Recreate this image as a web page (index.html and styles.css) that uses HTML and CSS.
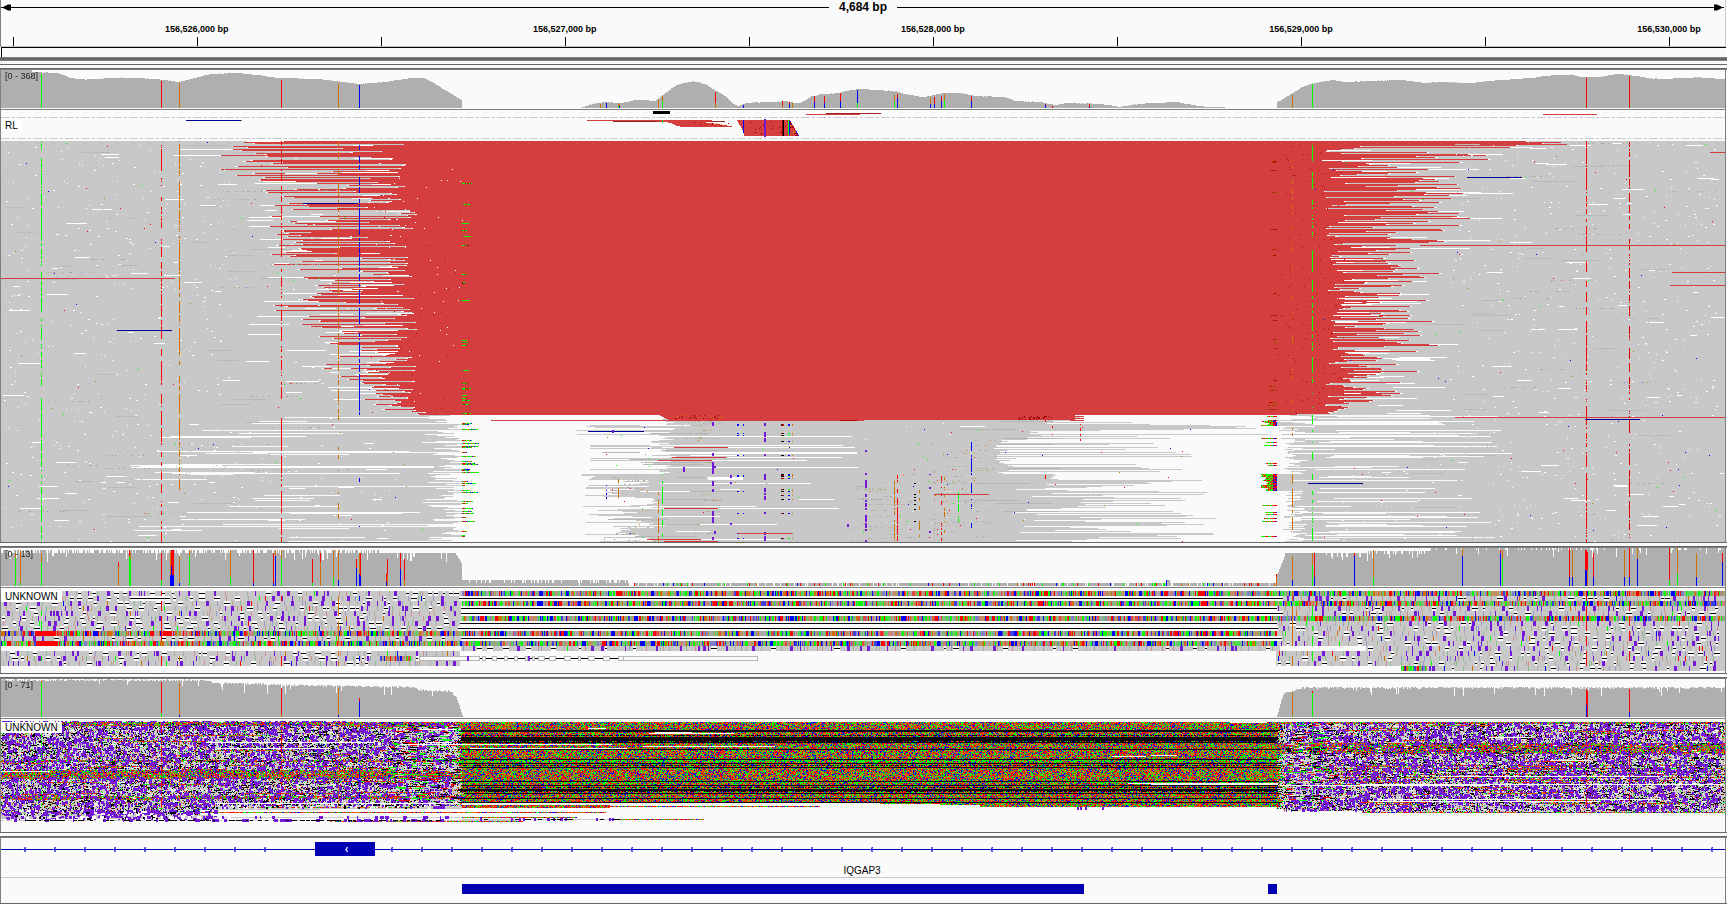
FILE: index.html
```html
<!DOCTYPE html>
<html lang="en">
<head>
<meta charset="utf-8">
<title>IQGAP3 - alignment browser</title>
<link rel="stylesheet" href="styles.css">
</head>
<body>
<main class="browser">
  <header class="ruler">
    <div class="span">
      <svg class="span-line" width="828" height="9" viewBox="0 0 828 9"><path d="M0 4.5H828" stroke="#000"/><path d="M1 4.5L7 1.5H10V7.5H7Z"/></svg>
      <span class="span-text">4,684 bp</span>
      <svg class="span-line" width="828" height="9" viewBox="0 0 828 9"><path d="M0 4.5H827" stroke="#000"/><path d="M826 4.5L820 1.5H817V7.5H820Z"/></svg>
    </div>
    <div class="scale">
      <span class="tick"></span>
      <span class="tick">156,526,000 bp</span>
      <span class="tick"></span>
      <span class="tick">156,527,000 bp</span>
      <span class="tick"></span>
      <span class="tick">156,528,000 bp</span>
      <span class="tick"></span>
      <span class="tick">156,529,000 bp</span>
      <span class="tick"></span>
      <span class="tick">156,530,000 bp</span>
    </div>
  </header>
  <div class="locus"></div>
  <div class="bar"></div>
  <div class="splitter head"></div>

  <section class="panel">
    <div class="track coverage"><canvas id="cov1" width="1724" height="39"></canvas><span class="range">[0 - 368]</span></div>
    <div class="track reads"><canvas id="reads1" width="1724" height="432"></canvas><span class="group rl">RL</span></div>
  </section>
  <div class="splitter"></div>
  <section class="panel">
    <div class="track coverage"><canvas id="cov2" width="1724" height="39"></canvas><span class="range">[0 - 13]</span></div>
    <div class="track reads"><canvas id="reads2" width="1724" height="85"></canvas><span class="group">UNKNOWN</span></div>
  </section>
  <div class="splitter"></div>
  <section class="panel">
    <div class="track coverage"><canvas id="cov3" width="1724" height="39"></canvas><span class="range">[0 - 71]</span></div>
    <div class="track reads"><canvas id="reads3" width="1724" height="113"></canvas><span class="group">UNKNOWN</span></div>
  </section>
  <div class="splitter"></div>
  <section class="panel">
    <div class="track gene"><canvas id="gene" width="1724" height="26"></canvas><span class="gene-name">IQGAP3</span></div>
    <div class="track regions"><span class="region wide"></span><span class="region small"></span></div>
  </section>
  <div class="floor"></div>
</main>
<script src="tracks.js"></script>
</body>
</html>
```
FILE: styles.css
```css
* { box-sizing: border-box; }

body {
  margin: 0;
  background: #fafafa;
  color: #000;
  font-family: "Liberation Sans", Arial, sans-serif;
  overflow: hidden;
}

.browser {
  display: flex;
  flex-direction: column;
  width: 1727px;
  height: 904px;
}

.ruler {
  width: 1726px;
  height: 47px;
  border-left: 1px solid #808080;
  border-right: 1px solid #c8c8d0;
  border-bottom: 1px solid #c4c4cc;
  overflow: hidden;
}

.span {
  display: flex;
  align-items: center;
  justify-content: space-between;
  height: 15px;
}

.span-line { flex: none; display: block; }

.span-text {
  font-size: 12px;
  font-weight: bold;
  line-height: 15px;
  white-space: nowrap;
}

.scale {
  display: flex;
  width: 1841px;
  margin-left: -80.4px;
  height: 31px;
}

.tick {
  flex: 0 0 184.05px;
  height: 31px;
  padding-top: 9px;
  font-size: 9px;
  font-weight: bold;
  line-height: 11px;
  text-align: center;
  background: linear-gradient(#000, #000) 92px 22px / 1px 9px no-repeat;
}

.locus {
  width: 1725px;
  height: 10px;
  margin-left: 1px;
  border: solid #000;
  border-width: 1px 0 0 1px;
}

.bar {
  height: 4px;
  background: #666;
  border: solid #808080;
  border-width: 1px 0;
}

.splitter {
  flex: none;
  height: 6px;
  background: linear-gradient(#666 1px, #fafafa 1px 4px, #666 4px 5px, #808080 5px);
}

.splitter.head {
  height: 9px;
  background: linear-gradient(#fafafa 3px, #666 3px 4px, #fafafa 4px 7px, #666 7px 8px, #808080 8px);
}

.panel {
  width: 1726px;
  border: solid #808080;
  border-width: 0 1px;
}

.track { position: relative; }
.track canvas { display: block; }
.coverage { height: 40px; border-bottom: 1px solid #808080; }

.range {
  position: absolute;
  left: 4px;
  top: 0;
  font-size: 9px;
  line-height: 12px;
  color: #222;
}

.group {
  position: absolute;
  left: 0;
  top: 3px;
  width: 61px;
  height: 11px;
  padding-left: 4px;
  background: #fff;
  font-size: 10px;
  line-height: 11px;
}

.group.rl { top: 10px; width: 22px; }

.gene {
  height: 40px;
  border-bottom: 1px solid #c8c8c8;
}

.gene-name {
  display: block;
  margin-top: 1px;
  padding-right: 2px;
  text-align: center;
  font-size: 10px;
  line-height: 12px;
}

.regions {
  display: flex;
  height: 25px;
  padding: 6px 0 0 461px;
}

.region { height: 10px; background: #0000b2; }
.region.wide { width: 622px; }
.region.small { width: 9px; margin-left: 184px; }

.floor { height: 1px; background: #666; }
```
FILE: tracks.js
```js
var GREY = '#c8c8c8', COV = '#afafaf', DARK = '#b6b6b6', RED = '#d53e3e', BG = '#fafafa',
    A = '#00ff00', T = '#ff0000', C = '#0000ff', G = '#d17105', INS = '#7519d9', NAVY = '#000096';
var BASES = [A, T, C, G];

var seed = 20231;
function rnd() {
  seed = (seed + 0x6D2B79F5) | 0;
  var t = Math.imul(seed ^ (seed >>> 15), 1 | seed);
  t = (t + Math.imul(t ^ (t >>> 7), 61 | t)) ^ t;
  return ((t ^ (t >>> 14)) >>> 0) / 4294967296;
}
function between(a, b) { return a + rnd() * (b - a); }
function int(a, b) { return Math.floor(between(a, b + 1)); }
function pick(list) { return list[Math.floor(rnd() * list.length)]; }

/* Painter in window coordinates: top is the first y of the track. */
function painter(id, top) {
  var ctx = document.getElementById(id).getContext('2d');
  return function (x0, y, x1, h, color) {
    ctx.fillStyle = color;
    ctx.fillRect(Math.round(x0) - 1, Math.round(y) - top, Math.round(x1) - Math.round(x0), h);
  };
}

/* Linear interpolation in a flat list x0,y0,x1,y1,... */
function lerp(pts, x) {
  for (var i = 2; i < pts.length; i += 2) {
    if (x <= pts[i]) {
      var f = (x - pts[i - 2]) / (pts[i] - pts[i - 2]);
      return pts[i - 1] + f * (pts[i + 1] - pts[i - 1]);
    }
  }
  return pts[pts.length - 1];
}

/* ---------- panel 1 coverage ---------- */
(function () {
  var p = painter('cov1', 70);
  var parts = [
    [1,70,30,70,33,72,58,73,70,78,85,79.5,120,77.5,155,79,179,82,190,79,210,74,240,73,255,75,280,78,320,79,358,84,385,82,410,78,424,78,440,87,461,100],
    [582,107,592,104,603,102,620,103,635,100,645,100,655,101,661,96,668,91,676,85,692,81,705,84,714,90,722,94,728,99,733,104,738,106,745,103,770,102,785,101,795,103,802,102,812,96,820,94.5,838,93,850,90,860,89,875,90,893,91,905,94,920,97,930,96,942,93,960,93,975,96,1005,97,1015,101,1040,102,1055,105,1065,103,1085,103.5,1100,104,1112,105.5,1120,107,1130,105,1150,103,1176,102,1190,104.5,1205,107,1224,107],
    [1277,102,1286,97,1302,87,1310,84,1320,82,1332,80,1345,82,1370,81,1400,80,1425,83,1440,82,1470,83,1500,80,1530,78,1545,76,1570,74.5,1580,77,1600,77,1615,74,1630,75,1650,78.5,1665,79,1680,78,1700,77.5,1725,79]
  ];
  parts.forEach(function (pts) {
    for (var x = pts[0]; x < pts[pts.length - 2] + 1; x++) {
      var y = Math.round(lerp(pts, x) + between(-0.3, 0.3));
      p(x, y, x + 1, 108 - y, COV);
    }
  });
  [[41,74,A],[161,81,T],[179,83,G],[281,80,T],[338,83,G],[359,85,C],[1292,95,G],[1312,84,A],[1586,78,T],[1629,76,T]]
    .forEach(function (s) { p(s[0], s[1], s[0] + 1, 108 - s[1], s[2]); });
  /* x, top, switch y, upper colour, lower colour */
  [[600,104,107,G,G],[606,103,107,C,C],[618,103,106,G,A],[619,104,106,G,C],[658,100,108,G,G],[662,96,101,G,A],[715,92,103,T,G],[743,105,108,C,C],[782,101,105,T,G],[789,102,104,T,C],[792,103,108,G,G],[814,96,102,T,C],[824,96,103,T,C],[840,93,101,T,C],[857,90,103,C,A],[894,95,102,G,A],[897,94,98,T,C],[930,98,104,G,C],[934,97,104,T,C],[941,96,101,T,C],[944,94,100,G,A],[971,96,101,T,C],[1045,104,105,T,C],[1052,106,108,T,T],[1089,104,107,T,C]]
    .forEach(function (s) { p(s[0], s[1], s[0] + 1, s[2] - s[1], s[3]); p(s[0], s[2], s[0] + 1, 108 - s[2], s[4]); });
})();

/* ---------- panel 1 alignments ---------- */
(function () {
  var p = painter('reads1', 110), x, y, i;

  [117, 138].forEach(function (yy) {
    for (x = 1; x < 1725; x += 16) { p(x, yy, x + 9, 1, GREY); p(x + 11, yy, x + 14, 1, GREY); }
  });
  p(186, 120, 241, 1, NAVY); p(241, 120, 242, 1, G);
  p(653, 111, 670, 3, '#000');
  p(826, 113, 881, 1, '#a02020'); p(806, 114, 860, 1, RED);
  p(1543, 114, 1597, 1, RED);
  p(587, 120, 712, 1, RED); p(613, 121, 725, 1, '#8c2b20'); p(657, 120, 712, 2, RED);
  [[660,712],[668,706],[672,714],[674,720],[676,727],[680,732]].forEach(function (r, k) { p(r[0], 121 + k, r[1], 1, RED); });
  for (i = 0; i < 16; i++) { p(737 + Math.min(i * 0.6, 7), 120 + i, 789 + i * 0.6, 1, RED); }
  for (i = 0; i < 22; i++) {
    x = int(694, 728); p(x, 120 + (x > 710 ? int(3, 6) : int(0, 4)), x + 1, 1, pick([G, '#c00000', '#c00000']));
    x = int(750, 790); y = int(121, 134); p(x, y, x + 1, 1, '#a80000');
  }
  for (i = 0; i < 16; i++) {
    x = 789 + i * 0.6;
    p(x - 3, 120 + i, x, 1, pick([G, '#a80000', RED])); p(x, 120 + i, x + 1, 1, pick([C, T, '#a80000']));
  }
  p(662, 120, 663, 3, A); p(743, 120, 744, 13, C); p(764, 119, 766, 18, INS);
  p(782, 120, 783, 16, '#7c0000'); p(783, 120, 784, 16, '#000'); p(788, 120, 789, 15, A); p(789, 121, 790, 14, C);

  var leftEdge = [141,243,143,205,148,203,152,230,160,205,170,215,176,238,184,250,190,244,200,262,215,265,230,270,250,268,270,258,290,300,305,260,320,300,345,308,365,318,380,330,395,345,405,370,415,398];
  var rightEdge = [141,1567,144,1560,152,1500,156,1520,160,1515,165,1442,176,1480,190,1475,205,1475,220,1480,235,1470,250,1410,265,1440,275,1455,290,1410,300,1442,320,1435,345,1440,360,1418,372,1420,380,1405,395,1400,405,1370,415,1335];

  for (y = 141; y < 415; y++) {
    p(1, y, 1725, 1, GREY);
    var near = lerp(leftEdge, y), L, R;
    L = rnd() < 0.4 ? between(near, near + 40) : between(near + 25, 415);
    if (rnd() < 0.2) { L = between(385, 418); }
    var far = lerp(rightEdge, y);
    R = rnd() < 0.36 ? between(far - 60, far) : between(1325, far - 15);
    if (rnd() < 0.12) { R = between(1322, 1345); }
    p(L, y, R, 1, RED);
    var gl = rnd() < 0.13 ? between(15, 70) : int(1, 3), gr = rnd() < 0.13 ? between(15, 60) : int(1, 3);
    p(L - gl, y, L, 1, '#fff'); p(R, y, R + gr, 1, '#fff');
    if (rnd() < 0.12) { x = between(245, 370); p(x, y, x + between(8, 40), 1, '#fff'); }
    if (rnd() < 0.10) { x = between(290, 400); p(x, y, x + 2, 1, '#fff'); }
    if (y > 300 && rnd() < 0.22) { x = between(1330, 1400); p(x, y, x + between(15, 55), 1, '#fff'); }
  }
  p(1, 142, 1725, 1, GREY); p(244, 142, 1561, 1, RED);
  p(1, 144, 1725, 1, GREY); p(404, 144, 1567, 1, RED);
  p(1, 415, 1725, 127, GREY);

  /* lower part: gaps left and right of the deletion, and the amplified middle */
  for (y = 415; y < 542; y++) {
    var tipRow = (y >= 420 && y < 426) || (y >= 474 && y < 491), a, b, c, d;
    a = rnd() < 0.25 ? between(452, 461) : between(420, 458);
    if (rnd() < 0.28 && y > 419) { a = 462; }
    d = tipRow ? 1277 : between(1283, 1308);
    if (y < 440 && !tipRow) { d = between(1277, 1330); }
    if (y < 420) {
      b = 577 + between(84, 98); c = between(1060, 1085);
    } else if (y < 440) {
      b = rnd() < 0.4 ? between(575, 600) : between(658, 675); c = rnd() < 0.5 ? between(1100, 1280) : between(1025, 1050);
    } else if (y < 474) {
      b = rnd() < 0.15 ? 590 : between(650, 678); c = rnd() < 0.32 ? between(1100, 1195) : between(994, 1018);
    } else if (y < 480) {
      b = between(581, 595); c = between(1050, 1058);
    } else {
      b = rnd() < 0.4 ? between(582, 625) : between(618, 665); c = rnd() < 0.45 ? between(1130, 1230) : between(1005, 1120);
    }
    p(a, y, b, 1, BG); p(c, y, d, 1, BG);
    if (a === 462) {
      var end = int(465, 479);
      for (x = 462; x < end; x++) { p(x, y, x + 1, 1, x < 465 ? pick([T, A, '#a04000']) : pick([A, A, A, G, C])); }
    }
    if (tipRow || rnd() < 0.12) {
      for (x = int(1261, 1269); x < 1277; x++) { p(x, y, x + 1, 1, x > 1272 ? pick([T, T, C]) : pick([A, A, G, T])); }
    }
    if (rnd() < 0.26) { x = between(130, 300); p(x, y, rnd() < 0.4 ? a : x + between(40, 130), 1, BG); }
    if (rnd() < 0.32) { x = between(1290, 1340); p(x, y, x + between(40, 185), 1, BG); }
    if (rnd() < 0.08) { x = between(600, 690); p(x, y, x + 60, 1, DARK); }
    if (rnd() < 0.08) { x = between(940, 1010); p(x, y, x + 55, 1, DARK); }
  }
  for (y = 415; y < 421; y++) { p(660 + (y - 415) * 2, y, 1084 - (y % 2) * 9, 1, RED); }
  p(491, 420, 864, 1, RED); p(864, 420, 1070, 1, GREY);

  [[640,436,852],[650,445,843],[662,447,855],[640,452,857],[640,453,857],[690,455,743],[728,457,842],[712,460,807],[660,467,858],[707,477,743],[708,478,743],[708,479,743],[660,483,811],[640,491,690],[720,489,740],[799,499,834],[640,506,756],[718,508,839],[660,516,720],[700,524,777],[676,531,710],[674,539,780],[640,425,690],[960,426,985],[1290,453,1512],[1290,446,1497],[1290,436,1491],[1320,488,1435],[1300,512,1480],[1290,517,1478],[1276,421,1474],[170,436,306],[140,466,434],[130,465,222],[131,467,434],[172,473,400],[187,512,420],[157,451,400]]
    .forEach(function (g) { p(g[0], g[1], g[2], 1, '#fff'); });

  /* small gaps and mismatches scattered over the grey reads */
  for (i = 0; i < 1300; i++) {
    x = rnd() < 0.5 ? between(3, 400) : between(1340, 1722); y = int(142, 541);
    if ((x > 240 && x < 430 || x < 1450 && x > 1300) && y < 415) { continue; }
    p(x, y, x + (rnd() < 0.1 ? int(4, 22) : int(1, 2)), 1, '#fff');
  }
  for (i = 0; i < 1600; i++) { x = rnd() < 0.5 ? between(3, 240) : between(1450, 1722); y = int(142, 541); p(x, y, x + 1, 1, '#bababa'); }
  for (i = 0; i < 150; i++) { x = rnd() < 0.5 ? between(3, 430) : between(1300, 1722); y = int(142, 541); p(x, y, x + 1, 1, pick(BASES)); }
  for (i = 0; i < 50; i++) { x = rnd() < 0.5 ? between(5, 260) : between(1400, 1680); y = int(142, 541); p(x, y, x + between(15, 45), 1, '#b9b9b9'); }
  for (i = 0; i < 34; i++) {
    var x0 = rnd() < 0.5 ? between(5, 330) : between(1470, 1670); y = int(142, 541);
    for (var k = 0; k < 12; k++) { x = x0 + rnd() * 50; p(x, y, x + 1, 1, pick(['#8f8fd0', '#c9a08a', '#90c890', '#d09090'])); }
  }
  for (i = 0; i < 100; i++) { x = between(370, 462); y = int(160, 414); p(x, y, x + 1, 1, rnd() < 0.55 ? '#fff' : '#b41414'); }
  for (i = 0; i < 140; i++) { x = between(1277, 1345); y = int(145, 414); p(x, y, x + 1, 1, '#b80808'); }
  [183,204,223,230,236,245,274,282,283,300,340,342,345,370,383,388,389,395,398,400,404,413].forEach(function (yy) {
    var stop = 462 + int(2, 10);
    for (x = 462; x < stop; x++) { p(x, yy, x + 1, 1, pick([A, A, '#8a2000'])); }
  });
  [161,162,170,192,229,249,255,293,315,320,339,343,348,380,386,390,402,405,409].forEach(function (yy) {
    for (x = int(1268, 1274); x < 1277; x++) { p(x, yy, x + 1, 1, pick(['#b80000', '#a05000'])); }
  });

  /* amplified middle: mismatches in short runs along single reads */
  var SOFT = ['#b9a894', '#b9a894', '#a9a9cf', '#c89860', '#a8c0a0', '#b0b0b0'];
  for (i = 0; i < 95; i++) {
    var zone = pick([[680,722,421,440],[600,660,474,541],[690,720,460,541],[850,905,482,541],[850,905,482,541],[925,985,474,541],[925,985,474,541],[940,990,440,470]]);
    x0 = between(zone[0], zone[1] - 12); y = int(zone[2], zone[3]);
    for (k = 0; k < 7; k++) { x = x0 + rnd() * 22; p(x, y, x + 1, 1, pick(SOFT)); }
  }
  for (i = 0; i < 110; i++) { x = pick([between(600, 650), between(680, 1000), between(900, 960), between(1000, 1200)]); y = int(421, 541); p(x, y, x + 1, 1, pick([A, T, C, G, '#fff'])); }
  for (i = 0; i < 40; i++) { x = between(675, 725); p(x, int(415, 418), x + 1, 1, pick(['#900000', '#a00000', G])); x = between(1017, 1052); p(x, int(416, 419), x + 1, 1, '#a00000'); }
  p(840, 420, 857, 1, '#c00000');

  function column(cx, y0, y1, w, color, density) {
    var on = rnd() < density;
    for (var yy = y0; yy < y1; yy++) {
      if (rnd() < 0.5) { on = rnd() < density; }
      if (on) { p(cx, yy, cx + w, 1, color); }
    }
  }
  column(41, 141, 542, 1, A, 0.68); column(161, 141, 542, 1, T, 0.66); column(179, 141, 490, 1, G, 0.7);
  column(281, 141, 400, 1, T, 0.66); column(281, 418, 542, 1, T, 0.8); column(338, 141, 420, 1, G, 0.7); column(338, 430, 542, 1, G, 0.15);
  column(359, 143, 170, 1, C, 0.5); column(359, 177, 415, 1, C, 0.8); column(359, 460, 542, 1, C, 0.1);
  column(1292, 158, 415, 1, G, 0.3); column(1292, 424, 436, 1, G, 0.5); column(1292, 474, 530, 1, G, 0.85);
  column(1312, 145, 415, 1, A, 0.52); column(1312, 415, 541, 1, A, 0.6);
  column(1586, 141, 542, 1, T, 0.72); column(1629, 141, 538, 1, '#e00000', 0.66);

  function blocks(cx, w, color, list) { list.forEach(function (b) { p(cx, b[0], cx + w, b[1], color); }); }
  blocks(712, 2, INS, [[422,4],[453,3],[462,6],[468,6],[481,5],[489,3],[511,5],[517,6],[537,3]]);
  blocks(764, 2, INS, [[423,3],[432,5],[438,4],[454,2],[474,6],[488,4],[493,2],[496,4],[512,2],[532,3],[536,5]]);
  blocks(865, 2, INS, [[450,2],[473,2],[480,8],[494,3],[500,2],[503,4],[508,2],[515,7],[523,5],[529,2],[540,2]]);
  blocks(683, 2, INS, [[467,5]]); blocks(714, 2, INS, [[457,1],[466,2],[531,3]]); blocks(730, 2, INS, [[475,3],[482,2],[523,2]]);
  blocks(929, 2, INS, [[474,1],[487,2],[531,2]]); blocks(847, 2, INS, [[524,3]]);
  [424,425,433,435,441,455,474,475,476,478,489,491,495,499,513,533,538].forEach(function (yy) {
    p(781, yy, 784, 1, pick(['#201000', '#7c2000'])); p(783, yy, 784, 1, pick(['#000', T]));
    p(788, yy, 790, 1, pick([A, C, C])); p(792, yy, 793, 1, G);
    if (rnd() < 0.7) { p(743, yy, 744, 1, C); p(737, yy, 739, 1, C); }
  });
  column(658, 492, 541, 1, G, 0.7); column(662, 474, 541, 1, A, 0.6); column(661, 476, 541, 1, GREY, 0.2);
  column(894, 474, 541, 1, G, 0.7); column(897, 474, 541, 1, T, 0.66); column(919, 490, 541, 1, G, 0.3);
  blocks(914, 2, '#000', [[483,1],[494,1],[497,1],[500,1],[504,1],[509,1],[521,1]]);
  column(934, 470, 541, 1, '#c09090', 0.35); column(941, 470, 541, 1, T, 0.35); column(944, 474, 541, 1, G, 0.3);
  column(958, 492, 512, 1, A, 0.7); column(958, 515, 530, 1, A, 0.4); column(971, 440, 475, 1, C, 0.6); column(971, 480, 541, 1, C, 0.3);
  column(1045, 415, 422, 1, T, 0.4); p(1045, 475, 1046, 4, T); column(1052, 415, 442, 1, T, 0.3); column(1080, 424, 442, 1, T, 0.3);
  column(618, 474, 500, 1, G, 0.4); column(606, 474, 500, 1, C, 0.2);

  /* reads with an abnormal mate */
  [[1,278,175],[1420,245,1725],[1672,272,1725],[1670,285,1725],[1710,152,1725],[1455,417,1725],[674,447,728],[672,457,726],[658,460,712],[934,494,989],[664,508,718],[738,533,792],[647,539,701],[664,541,718]]
    .forEach(function (r) { p(r[0], r[1], r[2], 1, RED); });
  [[303,203,358],[117,330,172],[1467,177,1522],[1585,419,1640],[588,431,644],[1308,483,1363]]
    .forEach(function (r) { p(r[0], r[1], r[2], 1, NAVY); });
  p(612, 430, 614, 3, INS);
})();

/* ---------- panel 2 coverage ---------- */
(function () {
  var p = painter('cov2', 548), x, y;
  for (x = 1; x < 462; x++) {
    y = x < 380 ? (rnd() < 0.55 ? 550 : 553) : 553;
    if (rnd() < 0.09) { y += int(3, 10); }
    if (x > 455) { y = 553 + (x - 455) * 1.6; }
    y = Math.round(y);
    p(x, y, x + 1, 586 - y, COV);
  }
  for (x = 462; x < 629; x++) { y = rnd() < 0.72 ? 580 : 583; if (rnd() > 0.02) { p(x, y, x + 1, 586 - y, COV); } }
  for (x = 634; x < 1277; x++) {
    if (rnd() < 0.08) { continue; }
    p(x, 583, x + 1, 3, rnd() < 0.16 ? pick([T, T, A, A, A, G, C]) : COV);
  }
  p(1166, 580, 1170, 3, COV); p(1166, 580, 1167, 6, C);
  p(1276, 574, 1277, 4, T); p(1276, 577, 1277, 9, G);
  for (x = 1277; x < 1725; x++) {
    y = x < 1285 ? 574 - (x - 1277) * 2.4 : x < 1368 ? (rnd() < 0.85 || x < 1320 ? 553 : 557) : x < 1430 ? (rnd() < 0.72 ? 551 : 554) : (rnd() < 0.82 ? 548 : 550);
    if (x > 1320 && rnd() < 0.07) { y += int(2, 9); }
    y = Math.round(y);
    p(x, y, x + 1, 586 - y, COV);
  }
  /* x, width, top, first boundary, second boundary, two colours */
  [[15,1,553,558,586,G,A],[20,1,550,583,586,G,A],[41,1,553,562,586,G,A],[118,1,562,567,586,T,G],[129,1,550,556,586,T,A],[130,1,553,559,586,G,A],[161,1,553,580,586,T,A],[170,1,553,575,586,G,C],[171,1,550,566,586,T,C],[172,2,550,575,586,T,C],[179,1,556,583,586,G,C],[189,1,550,556,586,G,A],[230,1,550,577,586,G,A],[253,1,550,583,586,T,C],[273,1,553,583,586,T,C],[275,1,550,556,586,G,C],[281,1,550,559,586,G,A],[312,1,559,583,586,T,A],[320,1,553,562,586,T,G],[333,1,550,577,586,G,A],[338,1,550,580,586,G,C],[356,1,559,568,586,T,C],[359,1,553,574,586,G,C],[360,1,553,576,586,T,C],[386,1,574,582,586,T,C],[387,1,559,575,586,T,G],[400,1,553,569,586,T,C],[404,1,559,580,586,T,G],[1292,1,556,580,586,G,C],[1312,1,553,565,586,G,A],[1314,1,553,577,586,T,C],[1354,1,553,556,586,T,C],[1373,1,550,577,586,G,A],[1462,1,548,556,586,G,C],[1500,1,550,553,586,T,C],[1502,1,550,559,586,G,A],[1569,1,548,577,586,T,C],[1572,1,550,577,586,G,C],[1585,2,550,570,586,T,C],[1587,1,552,570,586,T,G],[1593,1,553,577,586,T,C],[1624,1,550,577,586,G,C],[1629,1,548,577,586,T,C],[1637,1,548,559,586,G,C],[1669,1,548,580,586,T,A],[1677,1,548,574,586,G,A],[1696,1,553,577,586,G,C],[1722,1,553,562,586,T,C]]
    .forEach(function (s) { p(s[0], s[2], s[0] + s[1], s[3] - s[2], s[5]); p(s[0], s[3], s[0] + s[1], 586 - s[3], s[6]); });
})();

/* ---------- panel 2 alignments ---------- */
(function () {
  var p = painter('reads2', 588);
  function noisy(x0, x1, y) {
    p(x0, y, x1, 5, GREY);
    var x = x0 + int(1, 6);
    while (x < x1 - 6) {
      var r = rnd(), w;
      if (r < 0.24) { w = int(2, 6); p(x, y, x + w, 5, BG); p(x, y + 2, x + w, 1, '#000'); }
      else if (r < 0.52) { w = int(1, 3); p(x, y, x + w, 5, INS); }
      else if (r < 0.58) { w = 1; p(x, y, x + 1, 5, pick(BASES)); }
      else { w = 1; p(x, y, x + 1, 5, pick(['#8fbc8f', '#bfa690', '#b0b0b0', '#9a9ac8', '#cc9090'])); }
      x += w + int(1, 10);
    }
  }
  function colourful(x0, x1, y) {
    var prev = A;
    for (var x = x0; x < x1; x++) {
      if (rnd() < 0.8) { prev = pick([A, A, T, T, C, C, G, '#4040e0', '#e04848', '#50d850', '#50d850', '#bf9060', '#bf9060', '#80b880', '#80b880', '#c88080', '#8080c8', '#a8a8a8', '#a8a8a8']); }
      p(x, y, x + 1, 5, prev);
    }
  }
  function skip(x0, x1, y) { p(x0, y, x1, 5, BG); p(x0, y + 2, x1, 1, '#000'); }

  var left = 'nnnnnnnncnc-nnn-', mid = 'clcllcllclcn----', right = 'cncnncnnnnnnnnnn';
  for (var k = 0; k < 16; k++) {
    var y = 591 + 5 * k, edge = 455 + int(0, 6), start = 1277 + int(0, 8);
    if (mid[k] === 'c') { edge = 462; start = 1277; }
    if (k === 11) { start = 1366; }
    if (k > 11) { edge = 460; start = 1276; }
    if (k === 15) { start = 1401; }
    if (left[k] === 'n') { noisy(1, edge, y); }
    if (left[k] === 'c') { colourful(1, edge, y); }
    if (mid[k] === 'c') { colourful(edge, start, y); }
    if (mid[k] === 'l') { skip(edge, start, y); }
    if (mid[k] === 'n') { noisy(461, 1280, y); }
    if (right[k] === 'c') { colourful(start, 1725, y); } else { noisy(start, 1725, y); }
  }
  skip(130, 170, 596);
  p(35, 631, 56, 5, T); p(36, 641, 58, 5, T); p(163, 631, 172, 5, T);
  p(1198, 591, 1205, 5, T); p(1201, 601, 1207, 5, T);
  colourful(1401, 1427, 666); colourful(380, 412, 656);
  [[41,A,0.5],[161,T,0.6],[179,G,0.3],[281,T,0.3],[338,G,0.8],[359,C,0.5],[1292,G,0.9],[1312,A,0.6],[1586,T,0.7],[1629,T,0.5]].forEach(function (s) {
    for (var k = 0; k < 15; k++) { if (k !== 11 && rnd() < s[2]) { p(s[0], 591 + 5 * k, s[0] + 1, 5, s[1]); } }
  });

  /* low-quality read drawn as an outline */
  function box(x0, x1) { p(x0, 656, x1, 5, DARK); p(x0 + 1, 657, x1 - 1, 3, BG); }
  p(418, 656, 462, 5, BG);
  p(480, 658, 622, 1, '#000');
  box(419, 480); p(467, 656, 469, 5, INS);
  for (var x = 482; x < 620; x += int(3, 8)) { var w = int(2, 8); box(x, x + w); x += w; if (rnd() < 0.3) { p(x, 656, x + 2, 5, INS); } }
  box(623, 758);
})();

/* ---------- panel 3 coverage ---------- */
(function () {
  var p = painter('cov3', 679);
  [[1,680,200,680,222,683,300,685,350,686,412,687,420,690,450,691,456,697,460,708,462,715,464,717],
   [1277,715,1280,704,1284,692,1295,690,1302,688,1320,687.5,1725,687.5]].forEach(function (pts) {
    for (var x = pts[0]; x < pts[pts.length - 2] + (pts[0] > 5 ? 0 : 1); x++) {
      var y = lerp(pts, x) + between(-0.8, 1.2);
      if (rnd() < 0.05 && x < 440 || rnd() < 0.03 && x > 1330) { y += int(3, 9); }
      y = Math.round(y);
      p(x, y, x + 1, 717 - y, COV);
    }
  });
  [[41,681,683,G,A],[161,682,713,T,A],[179,683,715,G,C],[281,688,714,T,G],[338,688,715,G,C],[359,698,701,T,C],[1292,692,716,G,A],[1312,691,693,T,A],[1586,689,705,T,C],[1587,691,717,T,T],[1629,689,712,T,C]]
    .forEach(function (s) { p(s[0], s[1], s[0] + 1, s[2] - s[1], s[3]); p(s[0], s[2], s[0] + 1, 717 - s[2], s[4]); });
})();

/* ---------- panel 3 alignments ---------- */
(function () {
  var p = painter('reads3', 719), x, y, i;
  var black = {730:1,731:1,737:1,738:1,739:1,740:1,742:1,749:1,759:1,763:1,767:1,781:1,785:1,789:1,790:1,793:1,798:1,802:1};
  var dim = {735:1,741:1,765:1,787:1,791:1};
  var green = {760:1,761:1,782:1};
  function bottomAt(x) {
    if (x < 462) { return 815; }
    if (x < 880) { return 803; }
    if (x < 940) { return 804; }
    if (x < 980) { return 805; }
    if (x < 1277) { return 807; }
    if (x < 1283) { return 809; }
    return x < 1362 ? 811 : 813;
  }
  for (y = 722; y < 815; y++) {
    var hot = (y < 726) || (y > 769 && y < 779) || (y > 795 && y < 799) || y === 760 || y === 761,
        hotR = (y < 724) || (y > 742 && y < 754) || (y > 763 && y < 782 && y % 3 === 0) || y === 812,
        e0 = 457 + int(0, 5), e1 = 1277 + int(0, 6);
    for (x = 1; x < 1725; x++) {
      if (y >= bottomAt(x)) { continue; }
      var c, r = rnd();
      if (x >= e0 && x < e1) {
        if (black[y]) { c = '#000'; }
        else if (dim[y]) { c = r < 0.55 ? '#000' : pick(BASES); }
        else if (green[y]) { c = r < 0.5 ? A : pick(BASES); }
        else { c = pick([A, A, A, T, T, T, G, G, G, C, C]); }
      } else {
        var h = x < 500 ? hot : hotR;
        if (x > 380 && x < 500 && y < 728) { h = true; }
        if (h) { c = r < 0.12 ? INS : r < 0.16 ? '#000' : r < 0.2 ? GREY : pick([A, T, T, C, G, G, A]); }
        else { c = r < 0.14 ? '#000' : r < 0.29 ? pick(BASES) : r < 0.34 ? BG : GREY; }
      }
      p(x, y, x + 1, 1, c);
    }
  }
  /* deletions as short dashes, then insertions as blocks over their neighbours */
  for (i = 0; i < 2600; i++) {
    x = rnd() < 0.5 ? between(2, 450) : between(1285, 1720); y = int(724, x < 500 ? 808 : 810);
    if (y > 769 && y < 779 && x < 500) { continue; }
    p(x, y, x + int(2, 5), 1, pick(['#000', '#000', BG]));
  }
  for (i = 0; i < 6000; i++) {
    x = rnd() < 0.5 ? between(2, 452) : between(1285, 1720); y = int(722, x < 500 ? 812 : 809);
    if (y > 768 && y < 777 && x < 500 || y > 743 && y < 752 && x > 1280 && rnd() < 0.7) { continue; }
    p(x, y, x + int(1, 3), 3, INS);
  }
  for (i = 0; i < 110; i++) { x = between(2, 355); p(x, 721, x + int(1, 4), 1, INS); }

  function tint(x0, x1, y, w) { for (var q = x0; q < x1; q++) { p(q, y, q + 1, w || 1, pick([A, T, T, G, G, C])); } }
  for (i = 0; i < 30; i++) { x = int(2, 380); y = int(723, 800); tint(x, x + int(30, 90), y); }
  for (i = 0; i < 36; i++) { x = int(1290, 1640); y = int(723, 808); tint(x, x + int(20, 85), y); }
  /* fewer insertions next to the breakpoints */
  for (i = 0; i < 420; i++) { x = rnd() < 0.6 ? between(385, 455) : between(1284, 1330); y = int(725, 800); p(x, y, x + int(3, 9), 1, pick([GREY, GREY, A, T, '#000'])); }

  /* unfilled stretches between reads */
  [[206,742,375],[217,748,330],[180,740,190],[1,771,50],[588,728,606],[649,733,734],[655,732,692],[400,744,612],[643,746,775],[470,748,627],[1112,756,1146],[1128,783,1278],[1151,755,1177],[1151,784,1278],[1360,784,1724],[1280,785,1490],[1378,799,1660],[1370,801,1600],[1489,737,1530],[1550,760,1590],[1440,776,1660],[1230,722,1267],[420,729,456],[425,742,452],[215,803,460],[576,803,725],[576,804,820]]
    .forEach(function (s) { p(s[0], s[1], s[2], 1, '#fff'); });
  p(200, 810, 462, 5, BG);
  p(215, 806, 462, 4, GREY);
  tint(240, 415, 807); p(320, 809, 462, 3, BG);
  for (i = 0; i < 150; i++) { x = between(215, 440); p(x, 804 + int(0, 3), x + 2, 2, pick(['#000', INS, GREY, BG])); }
  p(434, 806, 445, 3, INS);
  p(462, 803, 725, 2, BG);
  tint(462, 610, 805); tint(462, 820, 806); tint(462, 610, 807); tint(200, 606, 812);

  p(1, 816, 462, 6, BG);
  p(1, 815, 215, 4, GREY);
  for (i = 0; i < 330; i++) { x = between(2, 215); y = int(810, 819); p(x, y, x + int(1, 4), 2, rnd() < 0.65 ? INS : pick(['#000', BG])); }
  p(1, 820, 520, 1, GREY); p(200, 817, 460, 1, GREY); p(462, 819, 612, 1, GREY);
  tint(462, 577, 817); tint(611, 704, 819); tint(330, 523, 821);
  for (i = 0; i < 130; i++) { x = between(2, 458); y = pick([817, 820]); p(x, y - 1, x + int(1, 4), 3, rnd() < 0.6 ? INS : BG); x = between(2, 440); p(x, 820, x + 3, 1, '#000'); }
  for (i = 0; i < 15; i++) { x = between(470, 612); p(x, 818, x + 2, 3, INS); p(x + 4, 819, x + 8, 1, '#000'); }
  [1077, 1080, 1085, 1102].forEach(function (q) { p(q, 807, q + 2, 3, INS); });

  [[41,A,0.45],[161,T,0.6],[179,G,0.5],[281,T,0.6],[338,G,0.6],[359,C,0.4],[1292,G,0.5],[1312,A,0.55],[1586,T,0.5],[1629,T,0.45]].forEach(function (s) {
    for (y = 726; y < 808; y++) { if (rnd() < s[2]) { p(s[0], y, s[0] + 1, 1, s[1]); } }
  });
})();

/* ---------- gene model ---------- */
(function () {
  var p = painter('gene', 838), x;
  function chevron(cx, dark, light) {
    p(cx - 1, 849, cx + 1, 1, dark);
    p(cx, 848, cx + 1, 3, dark);
    p(cx + 1, 847, cx + 2, 1, dark); p(cx + 1, 851, cx + 2, 1, dark);
    p(cx + 1, 848, cx + 2, 1, light); p(cx + 1, 850, cx + 2, 1, light);
    p(cx, 847, cx + 1, 1, light); p(cx, 851, cx + 1, 1, light);
  }
  p(1, 849, 1725, 1, '#0000b2');
  for (x = 24; x < 270; x += 30) { chevron(x, '#3434e0', '#8c8cf4'); }
  for (x = 391; x < 1725; x += 30) { chevron(x, '#3434e0', '#8c8cf4'); }
  p(315, 842, 375, 14, '#0000b2');
  chevron(346, '#d8d8ff', '#7070e0');
})();
```
